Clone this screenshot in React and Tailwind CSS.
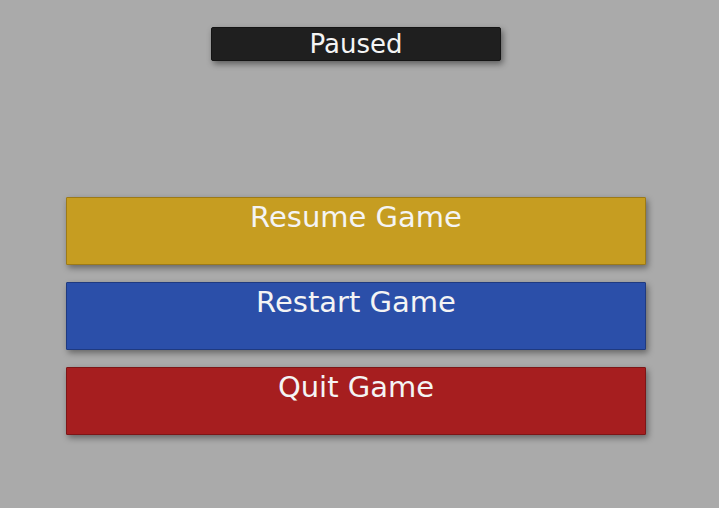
const buttons = [
  { label: "Resume Game", cls: "bg-[#c69d21] border-[#9c7a18]" },
  { label: "Restart Game", cls: "bg-[#2b4fa9] border-[#1f3a80]" },
  { label: "Quit Game", cls: "bg-[#a61e1f] border-[#7d1617]" },
];

export default function App() {
  return (
    <div className="w-[719px] h-[508px] overflow-hidden bg-[#aaaaaa] font-['DejaVu_Sans',sans-serif] text-[#f4f4f4]">
      <div className="pt-[27px] pl-[211px]">
        <div className="w-[290px] h-[34px] bg-[#1f1f1f] border border-[#141414] rounded-[2px] shadow-[2px_3px_6px_rgba(0,0,0,0.45)] flex justify-center pt-[1px] text-[26px] leading-[31px]">
          Paused
        </div>
      </div>

      <div className="mt-[136px] ml-[66px] w-[580px] flex flex-col gap-[17px]">
        {buttons.map((b) => (
          <button
            key={b.label}
            className={`h-[68px] w-full border rounded-[1px] shadow-[2px_3px_6px_rgba(0,0,0,0.4)] flex justify-center pt-[2px] text-[29px] leading-[34px] ${b.cls}`}
          >
            {b.label}
          </button>
        ))}
      </div>
    </div>
  );
}
